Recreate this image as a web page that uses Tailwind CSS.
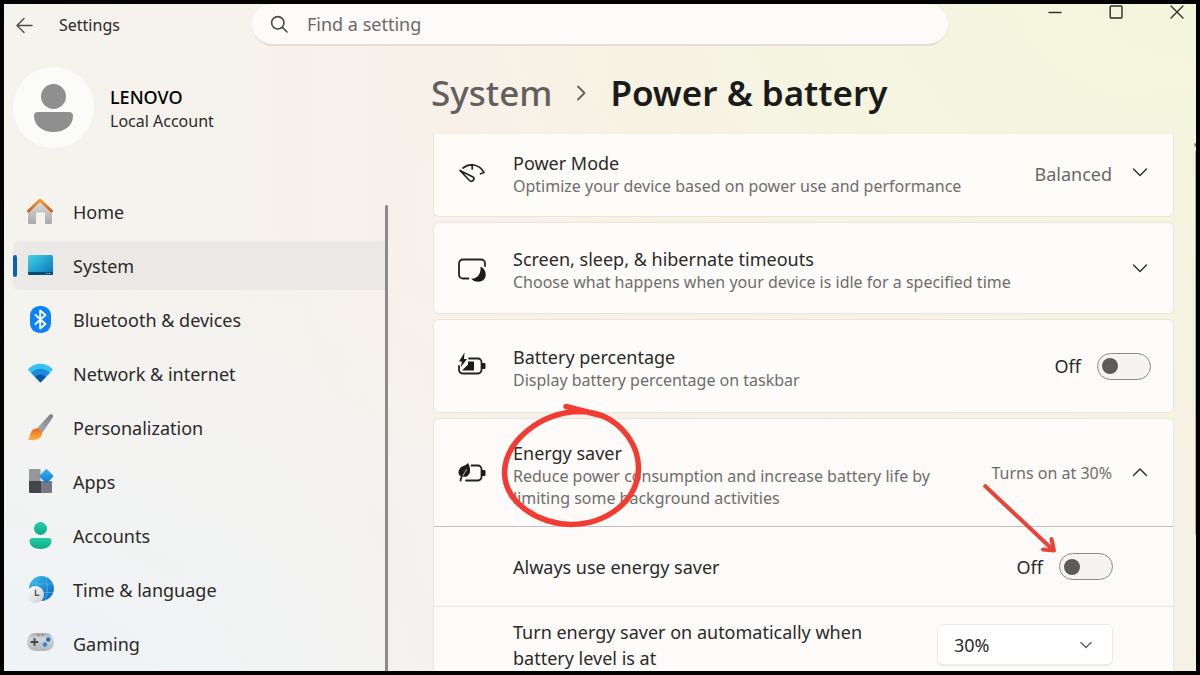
<!DOCTYPE html>
<html lang="en">
<head>
    <meta charset="UTF-8">
    <meta name="viewport" content="width=device-width, initial-scale=1.0">
    <title>Settings - Power &amp; battery</title>
    <script src="https://cdn.jsdelivr.net/npm/@tailwindcss/browser@4"></script>
</head>
<body class="font-['Noto_Sans',sans-serif] text-[#2b2a29]">
    <div class="h-screen flex flex-col overflow-hidden border-4 border-black bg-[radial-gradient(ellipse_at_bottom_left,#eff3f6_0%,#f1f3f4a0_25%,transparent_50%),radial-gradient(ellipse_at_top_right,#f3f6db_0%,#f4f5deb0_25%,transparent_50%),linear-gradient(to_right,#f4f3ed_0%,#f6f2eb_25%,#f9f0ea_38%,#f8f1e7_60%,#f6f2e7_80%,#f5f1e4_100%)]">

        <!-- Title bar -->
        <header class="grid grid-cols-[248px_1fr_248px] h-[42px] shrink-0">
            <div class="flex items-center gap-[26px] pl-3">
                <button aria-label="Back">
                    <svg class="w-[17px] h-[17px]" viewBox="0 0 17 17" fill="none" stroke="#4a4a48" stroke-width="1.4" stroke-linecap="round" stroke-linejoin="round"><path d="M16 8.5H1M8 1.5l-7 7 7 7"/></svg>
                </button>
                <span class="text-base">Settings</span>
            </div>
            <label class="flex items-center gap-[18px] pl-[18px] rounded-full bg-[#fdfbf9] border-b-2 border-[#e3ded8]">
                <svg class="w-[19px] h-[19px] shrink-0" viewBox="0 0 19 19" fill="none" stroke="#4a4a48" stroke-width="1.6" stroke-linecap="round"><circle cx="7.8" cy="7.8" r="6.2"/><path d="M12.4 12.4l4.6 4.6"/></svg>
                <input type="text" aria-label="Find a setting" placeholder="Find a setting" class="w-full bg-transparent text-lg outline-none placeholder:text-[#6b6967]">
            </label>
            <div class="flex items-start justify-end gap-[47px] pr-3 pt-px">
                <button aria-label="Minimize"><svg class="w-[14px] h-[14px]" viewBox="0 0 14 14" stroke="#2a2a28" stroke-width="1.4"><path d="M.5 7.5h13"/></svg></button>
                <button aria-label="Maximize"><svg class="w-[14px] h-[14px]" viewBox="0 0 14 14" fill="none" stroke="#2a2a28" stroke-width="1.4"><rect x="1.2" y="1" width="11.8" height="12" rx="1"/></svg></button>
                <button aria-label="Close"><svg class="w-[14px] h-[14px]" viewBox="0 0 14 14" stroke="#2a2a28" stroke-width="1.3" stroke-linecap="round"><path d="M1 1l12 12M13 1L1 13"/></svg></button>
            </div>
        </header>

        <div class="flex flex-1 min-h-0">
            <!-- Sidebar -->
            <aside class="w-[384px] shrink-0 flex flex-col pl-[9px] pt-[21px]">
                <div class="flex items-center gap-4">
                    <div class="w-[81px] h-[81px] rounded-full bg-[#fbfbfa] flex items-center justify-center">
                        <svg class="w-[39px] h-[48px]" viewBox="0 0 39 48" fill="#8f8f8f"><circle cx="19.5" cy="12.5" r="12.5"/><path d="M4 28h31a4 4 0 0 1 4 4c0 10-9 16-19.5 16S0 42 0 32a4 4 0 0 1 4-4z"/></svg>
                    </div>
                    <div class="pt-[2px]">
                        <div class="text-lg leading-6 font-medium text-black">LENOVO</div>
                        <div class="text-base leading-6">Local Account</div>
                    </div>
                </div>

                <div class="flex flex-1 min-h-0 pt-[39px]">
                    <nav class="flex-1 flex flex-col gap-[5px] text-lg">
                        <a href="#" class="flex items-center h-[49px] shrink-0 pl-[14px] gap-5">
                            <svg class="w-[26px] h-[28px]" viewBox="0 0 26 28">
                                <defs>
                                    <linearGradient id="wall" x1="0" y1="0" x2="0" y2="1"><stop offset="0" stop-color="#e0dfdf"/><stop offset="1" stop-color="#aaa9ab"/></linearGradient>
                                    <linearGradient id="roof" x1="0" y1="0" x2="0" y2="1"><stop offset="0" stop-color="#f09a1e"/><stop offset="1" stop-color="#cf5a20"/></linearGradient>
                                </defs>
                                <path d="M1 12L13 2l12 10v13a1 1 0 0 1-1 1h-6V15.500a1 1 0 0 0-1-1H10a1 1 0 0 0-1 1V26H2a1 1 0 0 1-1-1z" fill="url(#wall)"/>
                                <path d="M1.300 13.200L13 2l11.700 11.200" fill="none" stroke="url(#roof)" stroke-width="2.600" stroke-linecap="round" stroke-linejoin="round"/>
                            </svg>
                            Home
                        </a>
                        <a href="#" aria-current="page" class="flex items-center h-[49px] shrink-0 gap-5 rounded-l-md bg-[#ebe9e5]">
                            <span class="flex items-center gap-[10px]">
                                <span class="w-1 h-[22px] rounded-full bg-[#0a63b1]"></span>
                                <svg class="w-[26px] h-[26px]" viewBox="0 0 26 26">
                                    <defs><linearGradient id="screen" x1="0" y1="0" x2="1" y2="1"><stop offset="0" stop-color="#3fd3e6"/><stop offset="1" stop-color="#0b72b8"/></linearGradient></defs>
                                    <rect x="1" y="2" width="25" height="20" rx="1.500" fill="url(#screen)"/>
                                    <path d="M1 19h25v1.500a1.500 1.500 0 0 1-1.500 1.500h-22A1.500 1.500 0 0 1 1 20.500z" fill="#0b4a72"/>
                                    <path d="M19 20.500h1.500M21.500 20.500h2" stroke="#7db4d0" stroke-width="1"/>
                                </svg>
                            </span>
                            System
                        </a>
                        <a href="#" class="flex items-center h-[49px] shrink-0 pl-[14px] gap-5">
                            <svg class="w-[26px] h-[28px]" viewBox="0 0 26 28">
                                <rect x="3" y="0" width="21" height="27" rx="9.500" fill="#0a82f8"/>
                                <path d="M8.500 9l10 9-5.300 4.500V4.500L18.500 9l-10 9" fill="none" stroke="#fff" stroke-width="1.900" stroke-linejoin="round" stroke-linecap="round"/>
                            </svg>
                            Bluetooth &amp; devices
                        </a>
                        <a href="#" class="flex items-center h-[49px] shrink-0 pl-[14px] gap-5">
                            <svg class="w-[26px] h-[26px]" viewBox="0 0 26 26">
                                <path d="M.8 8.500C7.500 .8 19 .8 26 8.500L13.500 21.500z" fill="#35c3ee"/>
                                <path d="M4.200 12c5-5.600 13.400-5.600 18.600 0l-9.300 9.500z" fill="#1a8ce0"/>
                                <path d="M8.200 16c3-3.200 7.600-3.200 10.600 0l-5.300 5.500z" fill="#0d56a8"/>
                            </svg>
                            Network &amp; internet
                        </a>
                        <a href="#" class="flex items-center h-[49px] shrink-0 pl-[14px] gap-5">
                            <svg class="w-[26px] h-[28px]" viewBox="0 0 26 28">
                                <defs>
                                    <linearGradient id="handle" x1="1" y1="0" x2="0" y2="1"><stop offset="0" stop-color="#7c8087"/><stop offset="1" stop-color="#a9adb5"/></linearGradient>
                                    <linearGradient id="bristle" x1="0" y1="0" x2="0" y2="1"><stop offset="0" stop-color="#f06a20"/><stop offset="1" stop-color="#fbb03b"/></linearGradient>
                                </defs>
                                <path d="M24.500.2c1.400.2 2 1.300 1.300 3L15 19.500l-5.500-4.500L22.500.8c.6-.5 1.200-.7 2-.6z" fill="url(#handle)"/>
                                <path d="M8.700 14.500c3.700-.5 6.700 2 6.300 5.200-.5 5-7 7.500-14.500 5.800 2.700-1.500 2.200-3.500 3.200-6.500.8-2.600 2.500-4.200 5-4.500z" fill="url(#bristle)"/>
                            </svg>
                            Personalization
                        </a>
                        <a href="#" class="flex items-center h-[49px] shrink-0 pl-[14px] gap-5">
                            <svg class="w-[26px] h-[26px]" viewBox="0 0 26 26">
                                <defs><linearGradient id="tile" x1="0" y1="0" x2="1" y2="1"><stop offset="0" stop-color="#3db5f2"/><stop offset="1" stop-color="#0b76cf"/></linearGradient></defs>
                                <path d="M3 0h10.500v12H2V1a1 1 0 0 1 1-1z" fill="#94979c"/>
                                <path d="M2 12h12v12H3a1 1 0 0 1-1-1z" fill="#43464a"/>
                                <path d="M14 12h11v11a1 1 0 0 1-1 1H14z" fill="#767a80"/>
                                <rect x="14.200" y="1.800" width="10.500" height="10.500" rx="1.200" transform="rotate(45 19.400 7)" fill="url(#tile)"/>
                            </svg>
                            Apps
                        </a>
                        <a href="#" class="flex items-center h-[49px] shrink-0 pl-[14px] gap-5">
                            <svg class="w-[26px] h-[28px]" viewBox="0 0 26 28">
                                <defs><linearGradient id="person" x1="0" y1="0" x2="0" y2="1"><stop offset="0" stop-color="#25cfa4"/><stop offset="1" stop-color="#0fa98c"/></linearGradient></defs>
                                <circle cx="13.500" cy="6.500" r="6.500" fill="url(#person)"/>
                                <path d="M5.500 16h16a3 3 0 0 1 3 3c0 5-5 8-11 8s-11-3-11-8a3 3 0 0 1 3-3z" fill="url(#person)"/>
                            </svg>
                            Accounts
                        </a>
                        <a href="#" class="flex items-center h-[49px] shrink-0 pl-[14px] gap-5">
                            <svg class="w-[27px] h-[28px] -mr-px" viewBox="0 0 27 28">
                                <defs>
                                    <linearGradient id="globe" x1="0" y1="0" x2="1" y2="1"><stop offset="0" stop-color="#3bc0ee"/><stop offset="1" stop-color="#0a62bd"/></linearGradient>
                                    <linearGradient id="dial" x1="0" y1="0" x2="1" y2="1"><stop offset="0" stop-color="#fff"/><stop offset="1" stop-color="#cdced1"/></linearGradient>
                                </defs>
                                <circle cx="14.500" cy="12.500" r="12.400" fill="url(#globe)"/>
                                <path d="M4 8h21.500M4 16.500h22M11 .8C8.500 8 8.500 17 11 24M18.500 1c2.500 7 2.500 16 0 23" fill="none" stroke="#49bdec" stroke-opacity=".7" stroke-width="1"/>
                                <circle cx="8.500" cy="18.500" r="8.500" fill="url(#dial)"/>
                                <path d="M8.500 13.800v5.400h3.800" fill="none" stroke="#55585c" stroke-width="1.400"/>
                            </svg>
                            Time &amp; language
                        </a>
                        <a href="#" class="flex items-center h-[49px] shrink-0 pl-[14px] gap-5">
                            <svg class="w-[27px] h-[26px] -mr-px" viewBox="0 0 27 26">
                                <defs><linearGradient id="pad" x1="0" y1="0" x2="0" y2="1"><stop offset="0" stop-color="#a5a8ad"/><stop offset=".3" stop-color="#d3d5d9"/><stop offset="1" stop-color="#b3b6bb"/></linearGradient></defs>
                                <rect x="0" y="2" width="27" height="18" rx="8.500" fill="url(#pad)"/>
                                <path d="M7.500 7.200v7.600M3.700 11h7.600" stroke="#44474b" stroke-width="2"/>
                                <circle cx="21.300" cy="8.500" r="2.200" fill="#1e6fc0"/><circle cx="18" cy="13.500" r="2.200" fill="#2a86dc"/>
                                <path d="M10.800 4.200h1.400M14.800 4.200h1.400" stroke="#55585c" stroke-width="1.300"/>
                            </svg>
                            Gaming
                        </a>
                    </nav>
                    <div class="w-[3px] mt-[18px] rounded-t bg-[#8d8a87]"></div>
                </div>
            </aside>

            <!-- Page content -->
            <main class="flex-1 min-w-0 pl-[45px] pr-[18px]">
                <h1 class="flex items-center gap-5 h-[88px] pt-[6px] -ml-[2px] text-[35px] font-semibold text-[#1b1b1a]">
                    <a href="#" class="text-[#62605d] font-medium">System</a>
                    <svg class="w-[18px] h-[18px]" viewBox="0 0 18 18" fill="none" stroke="#62605d" stroke-width="1.800" stroke-linecap="round" stroke-linejoin="round"><path d="M6 2.500L12.500 9 6 15.500"/></svg>
                    <span>Power &amp; battery</span>
                </h1>

                <div class="flex flex-col gap-[5px]">
                    <section class="flex items-center h-[83px] pl-6 pr-[25px] pb-[3px] rounded-b-md border border-t-0 border-[#e9e6dc] bg-[#fdfcf9]">
                        <svg class="w-[28px] h-[28px] mr-[27px] shrink-0" viewBox="0 0 28 28" fill="none" stroke="#222" stroke-width="1.700" stroke-linecap="round" stroke-linejoin="round">
                            <path d="M5 8c6-5 16-4.500 21 4.500l-3.500 1.300M14.200 4.500v4.500"/>
                            <path d="M2 10.500l9.500 10c2 2 5.600-.5 4-3.200z"/>
                        </svg>
                        <div class="flex-1">
                            <h2 class="text-lg leading-6">Power Mode</h2>
                            <p class="text-base leading-[22px] text-[#6f6d6b]">Optimize your device based on power use and performance</p>
                        </div>
                        <button class="flex items-center gap-5 text-lg text-[#6b6967]">
                            Balanced
                            <svg class="w-4 h-4" viewBox="0 0 16 16" fill="none" stroke="#333" stroke-width="1.500" stroke-linecap="round" stroke-linejoin="round"><path d="M1.500 3L8 9.500 14.500 3"/></svg>
                        </button>
                    </section>

                    <section class="flex items-center h-[92px] pl-6 pr-[25px] rounded-md border border-[#e9e6dc] bg-[#fdfcfa]">
                        <svg class="w-[28px] h-[28px] mr-[27px] shrink-0" viewBox="0 0 28 28" fill="none" stroke="#222" stroke-width="1.800" stroke-linecap="round">
                            <path d="M27 12V9.500A4 4 0 0 0 23 5.500H5a4 4 0 0 0-4 4v11a4 4 0 0 0 4 4h5.500"/>
                            <path d="M22.500 12.500c8 4 6.500 15.300-2 15.300-3.500 0-6-1.300-7.300-3.300 6 .5 10-4.500 9.300-12z" fill="#1b1b1a" stroke="none"/>
                        </svg>
                        <div class="flex-1 pt-1">
                            <h2 class="text-lg leading-6">Screen, sleep, &amp; hibernate timeouts</h2>
                            <p class="text-base leading-[22px] text-[#6f6d6b]">Choose what happens when your device is idle for a specified time</p>
                        </div>
                        <button aria-label="Expand">
                            <svg class="w-4 h-4" viewBox="0 0 16 16" fill="none" stroke="#333" stroke-width="1.500" stroke-linecap="round" stroke-linejoin="round"><path d="M1.500 5L8 11.500 14.500 5"/></svg>
                        </button>
                    </section>

                    <section class="flex items-center h-[94px] pl-6 pr-[22px] rounded-md border border-[#e9e6dc] bg-[#fdfcfa]">
                        <svg class="w-[28px] h-[28px] mr-[27px] shrink-0" viewBox="0 0 28 28" fill="none" stroke="#222" stroke-width="1.800" stroke-linecap="round">
                            <path d="M11 6.500h9a3.500 3.500 0 0 1 3.500 3.500v8a3.500 3.500 0 0 1-3.500 3.500H4.500A3.500 3.500 0 0 1 1 18v-4"/>
                            <path d="M24 11h2.200c.8 0 1.300.6 1.300 1.300v3.400c0 .7-.5 1.300-1.300 1.300H24z" fill="#1b1b1a" stroke="none"/>
                            <path d="M10 9.500h6v9H4l6-6z" fill="#1b1b1a" stroke="none"/>
                            <path d="M6.500.5L1 9.500h3l-1.500 6L9 7H6z" fill="#1b1b1a" stroke="none"/>
                        </svg>
                        <div class="flex-1 pt-1">
                            <h2 class="text-lg leading-6">Battery percentage</h2>
                            <p class="text-base leading-[22px] text-[#6f6d6b]">Display battery percentage on taskbar</p>
                        </div>
                        <label class="flex items-center gap-4 text-lg">
                            Off
                            <input type="checkbox" role="switch" aria-label="Battery percentage" class="appearance-none flex items-center w-[54px] h-[27px] pl-1 rounded-full border border-[#8b8986] bg-[#f5f4f2] before:content-[''] before:w-4 before:h-4 before:rounded-full before:bg-[#5e5c5a]">
                        </label>
                    </section>

                    <section class="relative rounded-t-md border border-[#e9e6dc] bg-[#fcfbf9]">
                        <div class="flex items-center h-[108px] pl-6 pr-[25px] border-b border-[#c2c0bd]">
                            <svg class="w-[28px] h-[28px] mr-[27px] shrink-0" viewBox="0 0 28 28" fill="none" stroke="#222" stroke-width="1.800" stroke-linecap="round">
                                <path d="M13.500 6.500H20a3.500 3.500 0 0 1 3.500 3.500v8a3.500 3.500 0 0 1-3.500 3.500H8"/>
                                <path d="M24 11h2.200c.8 0 1.300.6 1.300 1.300v3.400c0 .7-.5 1.300-1.300 1.300H24z" fill="#1b1b1a" stroke="none"/>
                                <path d="M10 4c2.800 4.500 3 10.500-.5 13-1.500 1-3 1-4.500.5C.5 17.500-.5 13.500 1.500 10 3.500 6.500 7 7.500 10 4z" fill="#1b1b1a" stroke="none"/>
                                <path d="M8.500 9C6.500 13 3.500 15.500 2.500 21.500"/>
                                <path d="M8.500 10.500C7.500 13 6 14.500 5 16.500" stroke="#fcfbf9" stroke-width=".7"/>
                            </svg>
                            <div class="flex-1 pt-1">
                                <h2 class="text-lg leading-6">Energy saver</h2>
                                <p class="max-w-[430px] text-base leading-[22px] text-[#6f6d6b]">Reduce power consumption and increase battery life by limiting some background activities</p>
                            </div>
                            <button class="flex items-center gap-5 text-base text-[#6f6d6b]">
                                Turns on at 30%
                                <svg class="w-4 h-4" viewBox="0 0 16 16" fill="none" stroke="#333" stroke-width="1.500" stroke-linecap="round" stroke-linejoin="round"><path d="M1.500 10.500L8 4l6.500 6.500"/></svg>
                            </button>
                        </div>
                        <div class="flex items-center justify-between h-20 pl-[79px] pr-[60px] text-lg border-b border-[#e6e4e0]">
                            <h3>Always use energy saver</h3>
                            <label class="flex items-center gap-4">
                                Off
                                <input type="checkbox" role="switch" aria-label="Always use energy saver" class="appearance-none flex items-center w-[54px] h-[27px] pl-1 rounded-full border border-[#8b8986] bg-[#f5f4f2] before:content-[''] before:w-4 before:h-4 before:rounded-full before:bg-[#5e5c5a]">
                            </label>
                        </div>
                        <div class="flex items-center justify-between h-[76px] pl-[79px] pr-[60px] text-lg leading-[26px]">
                            <label for="batteryLevel" class="max-w-[360px]">Turn energy saver on automatically when battery level is at</label>
                            <div class="relative">
                                <select id="batteryLevel" class="appearance-none w-[176px] h-[42px] pl-4 rounded-md border border-b-2 border-[#eceae6] bg-white">
                                    <option>20%</option>
                                    <option selected>30%</option>
                                    <option>50%</option>
                                </select>
                                <svg class="absolute right-[21px] top-[15px] w-3 h-3 pointer-events-none" viewBox="0 0 12 12" fill="none" stroke="#666" stroke-width="1.500" stroke-linecap="round" stroke-linejoin="round"><path d="M1 3.500L6 8.500l5-5"/></svg>
                            </div>
                        </div>

                        <!-- Hand-drawn marks -->
                        <svg class="absolute left-[66px] -top-4 w-[142px] h-[126px] pointer-events-none" viewBox="0 0 142 126" fill="none" stroke="#f23c32" stroke-width="5.500" stroke-linecap="round" stroke-linejoin="round">
                            <path d="M66 3.500L103 13C123 22 138.500 42 138.500 65C138 98 107 121 71 121.500C35 120 5 98 4.500 70C5 38 40 10 78 8.500c10 0 18 1 27 5.500"/>
                        </svg>
                        <svg class="absolute right-[115px] top-[61px] w-[78px] h-[76px] pointer-events-none" viewBox="0 0 78 76" fill="none" stroke="#e8453a" stroke-width="4" stroke-linejoin="round">
                            <path d="M4 5L72 69"/>
                            <path d="M71.500 59L74 70.500 63 69.500" stroke-linecap="round"/>
                        </svg>
                    </section>
                </div>
            </main>

            <!-- Page scrollbar -->
            <div class="w-1 shrink-0 flex flex-col items-end pt-[97px]">
                <div class="w-[2px] h-1 rounded-l bg-[#8b8986]"></div>
                <div class="w-px h-[384px] mt-1 bg-[#b3b1a8]"></div>
            </div>
        </div>
    </div>
</body>
</html>
